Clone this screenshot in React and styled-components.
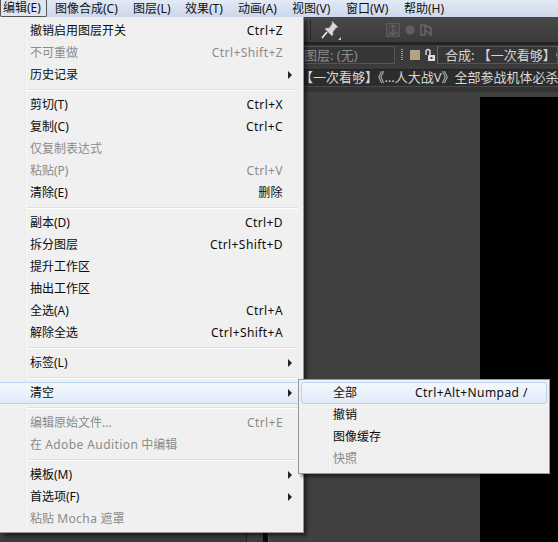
import styled, { createGlobalStyle } from 'styled-components'

const Global = createGlobalStyle`
    html, body { margin: 0; padding: 0; background: #3c3c3c; }
    body { font-family: "Noto Sans", "Noto Sans CJK SC", sans-serif; font-size: 12px; }
`

const Page = styled.div`
    position: relative;
    width: 558px;
    height: 542px;
    overflow: hidden;
    display: flex;
    flex-direction: column;
    background: #3c3c3c;
`

const MenuBar = styled.div`
    height: 17px;
    flex: none;
    display: flex;
    align-items: center;
    background: linear-gradient(#e3eaf6, #ccd7ea);
    color: #111;
    line-height: 17px;
    white-space: nowrap;
`

const BarItem = styled.div`
    box-sizing: border-box;
    width: ${p => p.$w}px;
    height: 17px;
    padding-left: ${p => p.$active ? 2 : 0}px;
    margin-right: ${p => p.$active ? 8 : 0}px;
    ${p => p.$active && `
        border: 1px solid #555;
        border-top: none;
        border-radius: 0 0 2px 2px;
        background: #dfe6f2;
        line-height: 15px;
    `}
`

const Toolbar = styled.div`
    height: 28px;
    flex: none;
    box-sizing: border-box;
    padding-left: 310px;
    display: flex;
    align-items: center;
    background: linear-gradient(#484848, #3b3b3b);
    border-bottom: 3px solid #242424;
`

const ToolDivider = styled.div`
    width: 1px;
    height: 20px;
    background: #262626;
    margin-right: 9px;
`

const ToolIcons = styled.div`
    display: flex;
    align-items: center;
    gap: 5px;
    margin-left: 44px;
`

const TabRow = styled.div`
    height: 20px;
    flex: none;
    box-sizing: border-box;
    padding: 1px 0 1px 304px;
    display: flex;
    align-items: stretch;
    background: #3a3a3a;
`

const Tab = styled.div`
    box-sizing: border-box;
    flex: ${p => p.$grow ? '1' : 'none'};
    width: ${p => p.$grow ? 'auto' : '91px'};
    padding-left: ${p => p.$grow ? 7 : 0}px;
    border: 1px solid #555;
    border-left: ${p => p.$grow ? '1px solid #666' : 'none'};
    background: #363636;
    color: ${p => p.$grow ? '#d6d6d6' : '#8d8d8d'};
    line-height: 16px;
    white-space: nowrap;
    overflow: hidden;
    font-size: 13px;
`

const TabTools = styled.div`
    width: 42px;
    flex: none;
    display: flex;
    align-items: center;
    gap: 4px;
    padding-left: 6px;
    box-sizing: border-box;
`

const Grip = styled.div`
    width: 2px;
    height: 12px;
    margin-right: 3px;
    background: repeating-linear-gradient(#999 0 1px, #333 1px 2px);
`

const Swatch = styled.div`
    width: 10px;
    height: 10px;
    flex: none;
    background: #b3a283;
`

const Crumb = styled.div`
    height: 17px;
    flex: none;
    box-sizing: border-box;
    margin-top: 4px;
    padding-left: 300px;
    background: #2c2c2c;
    border-top: 1px solid #222;
    color: #d8d8d8;
    line-height: 15px;
    white-space: nowrap;
    overflow: hidden;
    font-size: 13px;
`

const Band = styled.div`
    height: 6px;
    flex: none;
    background: #333;
    border-top: 1px solid #4a4a4a;
    box-sizing: border-box;
`

const Workspace = styled.div`
    flex: 1;
    display: flex;
    min-height: 0;
`

const Panel = styled.div`
    flex: none;
    width: ${p => p.$w}px;
    background: ${p => p.$bg};
    ${p => p.$line && `border-right: 1px solid ${p.$line};`}
`

const Stage = styled.div`
    flex: 1;
    padding: 5px 0 0 211px;
    background: #404040;
    box-sizing: border-box;
    display: flex;
`

const Canvas = styled.div`
    flex: 1;
    background: #000;
`

const Menu = styled.div`
    position: absolute;
    left: ${p => p.$x}px;
    top: ${p => p.$y}px;
    width: ${p => p.$w}px;
    box-sizing: border-box;
    padding: ${p => p.$pad};
    background: #f0f0f0;
    border: 1px solid #979797;
    border-left-width: ${p => p.$flush ? 0 : 1}px;
    border-top-width: ${p => p.$flush ? 0 : 1}px;
    box-shadow: 3px 3px 3px rgba(0, 0, 0, .45);
`

const Gutter = styled.div`
    position: absolute;
    top: 2px;
    bottom: 2px;
    left: ${p => p.$x}px;
    width: 2px;
    background: linear-gradient(90deg, #e2e3e3, #fff);
`

const Row = styled.div`
    position: relative;
    box-sizing: border-box;
    height: 22px;
    line-height: 22px;
    padding-left: ${p => p.$left}px;
    color: ${p => p.$off ? '#8b8b8b' : '#0c0c0c'};
    white-space: nowrap;
    ${p => p.$hover && `
        background: linear-gradient(#f4f8fd, #dfeaf8);
        border-top: 1px solid #b6d4f3;
        border-bottom: 1px solid #b6d4f3;
        line-height: 20px;
    `}
    ${p => p.$hover && p.$round && `
        border: 1px solid #b6d4f3;
        border-radius: 3px;
        padding-left: ${p.$left - 1}px;
    `}
`

const Latin = styled.span`
    letter-spacing: .42px;
`

const Shortcut = styled(Latin)`
    position: absolute;
    right: 20px;
    top: 0;
    color: ${p => p.$off ? '#8b8b8b' : '#0c0c0c'};
`

const ShortcutCol = styled(Latin)`
    position: absolute;
    left: ${p => p.$x}px;
    top: 0;
`

const Arrow = styled.i`
    position: absolute;
    left: 288px;
    top: 50%;
    margin-top: -4px;
    border-left: 4px solid #222;
    border-top: 4px solid transparent;
    border-bottom: 4px solid transparent;
`

const Sep = styled.div`
    height: 2px;
    margin: 3px 0 3px 27px;
    background: linear-gradient(#e0e0e0 50%, #fff 50%);
    width: 271px;
`

const bar = [
    ['编辑(E)', 47], ['图像合成(C)', 78], ['图层(L)', 52], ['效果(T)', 53],
    ['动画(A)', 54], ['视图(V)', 54], ['窗口(W)', 58], ['帮助(H)', 60],
]

const items = [
    { t: '撤销启用图层开关', k: 'Ctrl+Z' },
    { t: '不可重做', k: 'Ctrl+Shift+Z', off: true },
    { t: '历史记录', sub: true },
    'sep',
    { t: '剪切(T)', k: 'Ctrl+X' },
    { t: '复制(C)', k: 'Ctrl+C' },
    { t: '仅复制表达式', off: true },
    { t: '粘贴(P)', k: 'Ctrl+V', off: true },
    { t: '清除(E)', k: '删除' },
    'sep',
    { t: '副本(D)', k: 'Ctrl+D' },
    { t: '拆分图层', k: 'Ctrl+Shift+D' },
    { t: '提升工作区' },
    { t: '抽出工作区' },
    { t: '全选(A)', k: 'Ctrl+A' },
    { t: '解除全选', k: 'Ctrl+Shift+A' },
    'sep',
    { t: '标签(L)', sub: true },
    'sep',
    { t: '清空', sub: true, hover: true },
    'sep',
    { t: '编辑原始文件...', k: 'Ctrl+E', off: true },
    { t: <>在 <Latin>Adobe Audition</Latin> 中编辑</>, off: true },
    'sep',
    { t: '模板(M)', sub: true },
    { t: '首选项(F)', sub: true },
    { t: <>粘贴 <Latin>Mocha</Latin> 遮罩</>, off: true },
]

const subItems = [
    { t: '全部', k: 'Ctrl+Alt+Numpad /', hover: true },
    { t: '撤销' },
    { t: '图像缓存' },
    { t: '快照', off: true },
]

function PinIcon() {
    return (
        <svg width="22" height="22" viewBox="0 0 22 22">
            <path d="M12 2l6 6-2 1-3 4 0 3-1 1-7-7 1-1 3 0 3-4z" fill="#d8d8d8" stroke="#8a8a8a" strokeWidth=".6" />
            <path d="M7 13l-5 6" stroke="#eee" strokeWidth="1.6" />
            <path d="M21 18v3h-3z" fill="#c8c8c8" />
        </svg>
    )
}

function ToolGlyphs() {
    return (
        <ToolIcons>
            <svg width="14" height="14" viewBox="0 0 14 14" fill="none" stroke="#6a6a6a">
                <rect x=".5" y=".5" width="13" height="13" fill="#4a4a4a" stroke="#5a5a5a" />
                <path d="M7 2v9M4.500 4L7 2l2.500 2M3 9l4 3 4-3" />
            </svg>
            <svg width="10" height="10" viewBox="0 0 10 10"><circle cx="5" cy="5" r="4.500" fill="#5f5f5f" /></svg>
            <svg width="12" height="12" viewBox="0 0 12 12" fill="none" stroke="#666" strokeWidth="1.5">
                <path d="M1 1h4v10H1zM5 1l6 3v7L5 6" />
            </svg>
        </ToolIcons>
    )
}

function LockIcon() {
    return (
        <svg width="12" height="14" viewBox="0 0 12 14" fill="none">
            <path d="M2 7V3.500a2 2 0 0 1 4 0V7" stroke="#ddd" strokeWidth="1.400" />
            <rect x="4" y="7" width="7" height="6" fill="#ddd" />
            <rect x="6.500" y="9" width="2" height="2" fill="#444" />
        </svg>
    )
}

export default function App() {
    return (
        <Page>
            <Global />
            <MenuBar>
                {bar.map(([t, w], i) => (
                    <BarItem key={t} $w={w} $active={i == 0}>{t}</BarItem>
                ))}
            </MenuBar>
            <Toolbar>
                <ToolDivider />
                <PinIcon />
                <ToolGlyphs />
            </Toolbar>
            <TabRow>
                <Tab>图层: (无)</Tab>
                <TabTools>
                    <Grip />
                    <Swatch />
                    <LockIcon />
                </TabTools>
                <Tab $grow>合成: 【一次看够】《</Tab>
            </TabRow>
            <Crumb>【一次看够】《…人大战V》全部参战机体必杀技</Crumb>
            <Band />
            <Workspace>
                <Panel $w={246} $bg="#3a3a3a" $line="#222" />
                <Panel $w={16} $bg="#3e3e3e" />
                <Panel $w={5} $bg="#0c0c0c" $line="#555" />
                <Stage><Canvas /></Stage>
            </Workspace>

            <Menu $x={0} $y={17} $w={304} $pad="3px 0 2px" $flush>
                <Gutter $x={25} />
                {items.map((it, i) => it == 'sep' ? <Sep key={i} /> : (
                    <Row key={i} $left={30} $off={it.off} $hover={it.hover}>
                        {it.t}
                        {it.k && <Shortcut $off={it.off}>{it.k}</Shortcut>}
                        {it.sub && <Arrow />}
                    </Row>
                ))}
            </Menu>

            <Menu $x={298} $y={379} $w={252} $pad="2px 2px 3px">
                <Gutter $x={29} />
                {subItems.map(it => (
                    <Row key={it.t} $left={32} $off={it.off} $hover={it.hover} $round>
                        {it.t}
                        {it.k && <ShortcutCol $x={113}>{it.k}</ShortcutCol>}
                    </Row>
                ))}
            </Menu>
        </Page>
    )
}
